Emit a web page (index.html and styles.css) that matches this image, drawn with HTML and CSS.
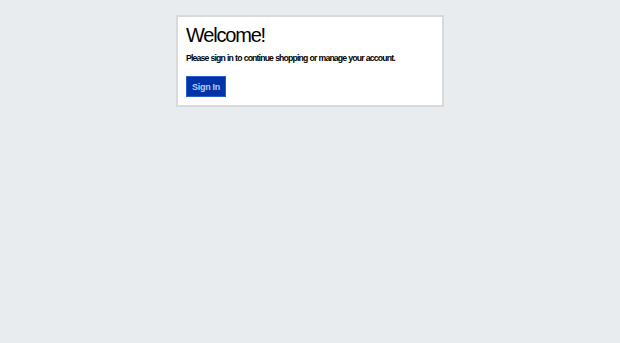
FILE: index.html
```html
<!DOCTYPE html>
<html>
<head>
<meta charset="utf-8">
<link rel="stylesheet" href="styles.css">
</head>
<body>
<div class="card">
  <h1 class="title">Welcome!</h1>
  <p class="lead">Please sign in to continue shopping or manage your account.</p>
  <button class="btn">Sign In</button>
</div>
</body>
</html>
```
FILE: styles.css
```css
html, body { margin: 0; padding: 0; }
body {
  background: #e8ecef;
  font-family: "Liberation Sans", Arial, sans-serif;
  width: 620px;
  height: 343px;
  padding-top: 15px;
  box-sizing: border-box;
}
.card {
  width: 268px;
  margin: 0 auto;
  box-sizing: border-box;
  background: #fff;
  border: 2px solid #d6dadd;
  padding: 7px 8px 8px 8px;
}
.title {
  margin: 0;
  font-size: 20px;
  font-weight: normal;
  letter-spacing: -1.2px;
  color: #000;
  line-height: 22px;
}
.lead {
  margin: 7px 0 13px;
  font-size: 8.7px;
  font-weight: bold;
  letter-spacing: -0.85px;
  word-spacing: 0.5px;
  line-height: 10px;
  color: #000;
}
.btn {
  display: block;
  border: 1px solid #2c5bd0;
  background: #0033a8;
  color: #b9cdf3;
  font-family: inherit;
  font-size: 9px;
  font-weight: bold;
  letter-spacing: -0.3px;
  height: 21px;
  width: 40px;
  padding: 0;
}
```
